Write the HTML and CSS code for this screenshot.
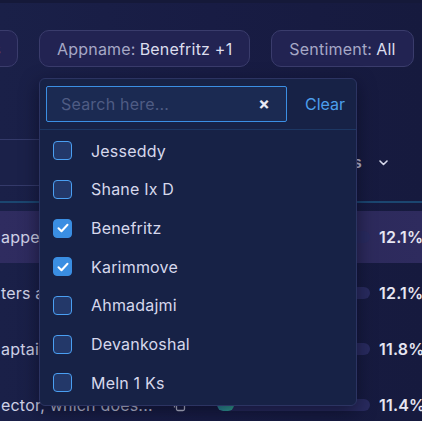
FILE: index.html
```html
<!DOCTYPE html>
<html>
<head>
<meta charset="utf-8">
<link rel="stylesheet" href="styles.css">
</head>
<body>
<div class="page">
  <div class="topline"></div>
  <div class="filters">
    <div class="pill pill-cut"><span class="lbl">Date:</span> <span class="val">Last 30 days</span></div>
    <div class="pill"><span class="lbl">Appname:</span> <span class="val">Benefritz +1</span></div>
    <div class="pill"><span class="lbl">Sentiment:</span> <span class="val">All</span></div>
  </div>
  <div class="table">
    <div class="thead">
      <div class="tsearch"></div>
      <div class="th">Mentions <svg class="chev" width="9" height="6" viewBox="0 0 9 6"><path d="M1 1l3.5 3.5L8 1" fill="none" stroke="#d6d8ea" stroke-width="1.6" stroke-linecap="round" stroke-linejoin="round"/></svg></div>
    </div>
    <div class="row row-active">
      <div class="cell-text">appened to the captain</div>
      <div class="cell-icon"></div>
      <div class="bar"><div class="fill" style="width:12%"></div></div>
      <div class="pct">12.1%</div>
    </div>
    <div class="row">
      <div class="cell-text">ters about the update</div>
      <div class="cell-icon"></div>
      <div class="bar"><div class="fill" style="width:12%"></div></div>
      <div class="pct">12.1%</div>
    </div>
    <div class="row">
      <div class="cell-text">aptain of the ship</div>
      <div class="cell-icon"></div>
      <div class="bar"><div class="fill" style="width:11%"></div></div>
      <div class="pct">11.8%</div>
    </div>
    <div class="row">
      <div class="cell-text">ector, which does...</div>
      <div class="cell-icon"><svg width="13" height="13" viewBox="0 0 13 13"><rect x="3.5" y="3.5" width="8" height="8" rx="1.5" fill="none" stroke="#c9cbe0" stroke-width="1.3"/><path d="M1.5 8.5V2.5a1 1 0 0 1 1-1h6" fill="none" stroke="#c9cbe0" stroke-width="1.3"/></svg></div>
      <div class="bar"><div class="fill" style="width:11%"></div></div>
      <div class="pct">11.4%</div>
    </div>
  </div>

  <div class="dropdown">
    <div class="dd-search">
      <div class="input"><span class="ph">Search here...</span><span class="x">×</span></div>
      <span class="clear">Clear</span>
    </div>
    <div class="dd-list">
      <div class="item"><span class="cb"></span><span>Jesseddy</span></div>
      <div class="item"><span class="cb"></span><span>Shane Ix D</span></div>
      <div class="item"><span class="cb on"><svg width="12" height="10" viewBox="0 0 12 10"><path d="M1.5 5.2l3 3L10.5 1.8" fill="none" stroke="#fff" stroke-width="2" stroke-linecap="round" stroke-linejoin="round"/></svg></span><span>Benefritz</span></div>
      <div class="item"><span class="cb on"><svg width="12" height="10" viewBox="0 0 12 10"><path d="M1.5 5.2l3 3L10.5 1.8" fill="none" stroke="#fff" stroke-width="2" stroke-linecap="round" stroke-linejoin="round"/></svg></span><span>Karimmove</span></div>
      <div class="item"><span class="cb"></span><span>Ahmadajmi</span></div>
      <div class="item"><span class="cb"></span><span>Devankoshal</span></div>
      <div class="item"><span class="cb"></span><span>Meln 1 Ks</span></div>
    </div>
  </div>
</div>
</body>
</html>
```

FILE: styles.css
```css
* { box-sizing: border-box; }
html, body { margin: 0; padding: 0; }
body {
  width: 422px;
  height: 421px;
  overflow: hidden;
  font-family: Inter, "Noto Sans", sans-serif;
  letter-spacing: 0.2px;
  background: linear-gradient(90deg, #1a2048 0%, #181c44 50%, #161a3e 100%);
}
.page { position: relative; width: 422px; height: 421px; overflow: hidden; }
.topline { height: 3px; background: #151939; }
.filters {
  display: flex;
  gap: 20px;
  padding-top: 27px;
  height: 71px;
  white-space: nowrap;
}
.pill {
  flex: none;
  height: 37px;
  padding: 0 17px;
  display: flex;
  align-items: center;
  border: 1px solid #3a3c6c;
  border-radius: 10px;
  background: #222352;
  font-size: 16px;
}
.pill-cut {
  width: 140px;
  margin-left: -122px;
  overflow: hidden;
  justify-content: flex-end;
  padding-right: 16px;
}
.pill + .pill { margin-left: 1px; }
.lbl { color: #a6a8c6; margin-right: 4px; }
.val { color: #dcdded; }

.table { margin-top: 57px; }
.thead {
  height: 72px;
  display: flex;
  align-items: flex-start;
  border-bottom: 2px solid #1b4670;
  margin-bottom: 8px;
}
.tsearch {
  margin-top: 8px;
  margin-left: -20px;
  width: 240px;
  height: 47px;
  border-top: 1px solid #343a6a;
  border-bottom: 1px solid #343a6a;
  background: #1b2149;
}
.th {
  margin-left: auto;
  margin-top: 21px;
  padding-right: 34px;
  display: flex;
  align-items: center;
  gap: 17px;
  color: #b8bad2;
  font-weight: 600;
  font-size: 16px;
}
.chev { margin-top: 1px; }

.row {
  height: 52px;
  margin-bottom: 4px;
  display: flex;
  align-items: center;
  font-size: 16px;
  color: #cfd1e6;
}
.row-active { background: linear-gradient(90deg, #2f2c60, #2a2858 60%, #2e2b5e); }
.cell-text { width: 173px; padding-left: 1px; white-space: nowrap; overflow: hidden; }
.cell-icon { width: 44px; display: flex; align-items: center; }
.bar {
  flex: 1;
  height: 12px;
  border-radius: 6px;
  background: #292b5f;
  overflow: hidden;
}
.fill { height: 100%; border-radius: 6px; background: linear-gradient(90deg, #2f8fa0, #35b39a); }
.pct {
  width: 43px;
  margin-left: 9px;
  color: #e6e6f2;
  font-weight: 600;
  white-space: nowrap;
}

.dropdown {
  position: absolute;
  left: 39px;
  top: 78px;
  width: 318px;
  height: 328px;
  background: #172246;
  border: 1px solid #2c3462;
  border-radius: 6px;
  box-shadow: 0 6px 18px rgba(5, 8, 25, 0.55);
}
.dd-search {
  display: flex;
  align-items: center;
  padding: 7px 0 7px 6px;
  border-bottom: 1px solid #1d3763;
}
.input {
  width: 241px;
  height: 36px;
  border: 1px solid #3b8fe4;
  background: #1b2a52;
  border-radius: 2px;
  display: flex;
  align-items: center;
  justify-content: space-between;
  padding: 0 16px 0 14px;
  font-size: 16px;
}
.ph { color: #4f5c84; }
.x { color: #e8eaf4; font-weight: 700; font-size: 17px; }
.clear { margin-left: 18px; color: #4c9eec; font-size: 16px; letter-spacing: 0; }
.dd-list { padding-top: 1.5px; }
.item {
  height: 38.67px;
  display: flex;
  align-items: center;
  padding-left: 13px;
  gap: 19px;
  font-size: 16px;
  color: #d6d8ec;
}
.cb {
  width: 19px;
  height: 19px;
  border: 1.5px solid #4a9ff2;
  border-radius: 4px;
  background: #233869;
  display: flex;
  align-items: center;
  justify-content: center;
}
.cb.on { background: #3a8ee2; border-color: #3a8ee2; }
```
